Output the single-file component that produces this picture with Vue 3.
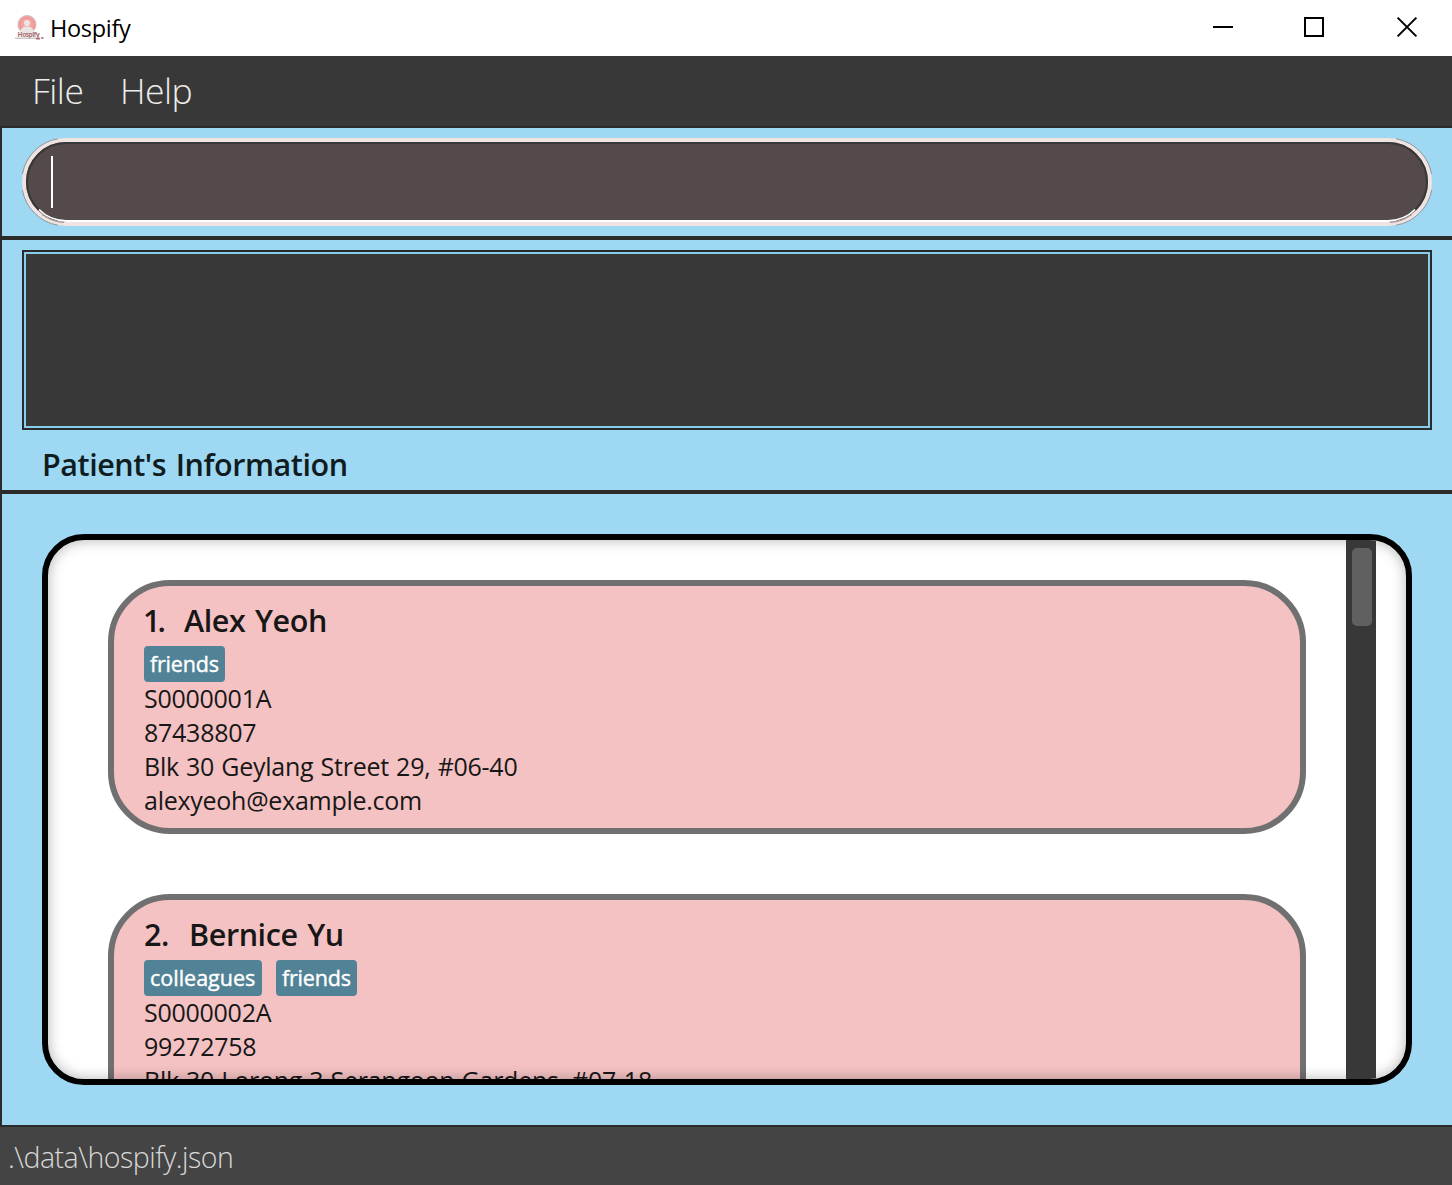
<script setup>
const menus = ['File', 'Help']
const patients = [
  {
    name: 'Alex Yeoh',
    tags: ['friends'],
    lines: ['S0000001A', '87438807', 'Blk 30 Geylang Street 29, #06-40', 'alexyeoh@example.com'],
  },
  {
    name: 'Bernice Yu',
    tags: ['colleagues', 'friends'],
    lines: ['S0000002A', '99272758', 'Blk 30 Lorong 3 Serangoon Gardens, #07-18'],
  },
]
</script>

<template>
  <div class="window">
    <header class="titlebar">
      <svg class="logo" width="30" height="28" viewBox="0 0 30 28">
        <circle cx="12" cy="10.5" r="9" fill="#f9a3a3" stroke="#c3b0b0" stroke-width="0.8" />
        <circle cx="12" cy="10.8" r="7" fill="none" stroke="#e08c8e" stroke-width="0.8" />
        <circle cx="12" cy="9" r="3.1" fill="#e9e6e6" />
        <path d="M4.5 19.5Q5.5 13.5 10.5 12.5H13.5Q18.5 13.5 19.5 19.5Z" fill="#e9e6e6" />
        <text class="logo-text" x="2.6" y="23" textLength="22">Hospify</text>
        <path d="M0 24.2H21" stroke="#b9aeb0" />
        <path d="M21 24.6H25M26 24H28.6" stroke="#a56d75" stroke-width="1.6" />
      </svg>
      <span class="app-name">Hospify</span>
      <div class="controls">
        <svg width="24" height="24" viewBox="0 0 24 24"><path d="M2 12H22" /></svg>
        <svg width="24" height="24" viewBox="0 0 24 24"><path d="M3 3H21V21H3Z" /></svg>
        <svg class="close" width="24" height="24" viewBox="0 0 24 24"><path d="M2.6 2.6L21.4 21.4M21.4 2.6L2.6 21.4" /></svg>
      </div>
    </header>

    <nav class="menubar">
      <span v-for="m in menus" :key="m" :class="['menu', m.toLowerCase()]">{{ m }}</span>
    </nav>

    <section class="command">
      <div class="field">
        <span class="caret"></span>
        <svg class="shine" width="1410" height="88" viewBox="0 0 1410 88" fill="none">
          <path d="M5 44A39 39 0 0 1 44 5H1366A39 39 0 0 1 1405 44A39 39 0 0 1 1393 72M5 44A39 39 0 0 0 17 72" stroke="#383838" stroke-width="2" />
          <path d="M44 83H1366" stroke="#fff" stroke-width="2" />
          <path d="M17 71.5Q27 82 44 83M1393 71.5Q1383 82 1366 83" stroke="#fff" stroke-width="1.8" />
          <path d="M20 76.5Q30 84 42 84.5M1390 76.5Q1380 84 1368 84.5" stroke="#8a8080" stroke-width="0.8" />
          <path d="M0.4 36A43.6 43.6 0 0 1 36 0.8M0.4 52A43.6 43.6 0 0 0 36 87.2M1409.6 36A43.6 43.6 0 0 0 1374 0.8M1409.6 52A43.6 43.6 0 0 1 1374 87.2" stroke="#8b8585" stroke-width="0.8" />
        </svg>
      </div>
    </section>

    <section class="result">
      <div class="display"></div>
      <h2 class="heading">Patient's Information</h2>
    </section>

    <section class="list-area">
      <div class="list">
        <div class="cards">
          <article v-for="(p, i) in patients" :key="p.name" class="card">
            <div class="name-row">
              <span :class="['num', 'num-' + (i + 1)]">{{ i + 1 }}.</span>
              <span class="name">{{ p.name }}</span>
            </div>
            <div class="tags">
              <span v-for="t in p.tags" :key="t" :class="['tag', t]">{{ t }}</span>
            </div>
            <div v-for="l in p.lines" :key="l" class="line">{{ l }}</div>
          </article>
        </div>
        <div class="scrollbar"><div class="thumb"></div></div>
      </div>
    </section>

    <footer class="status">.\data\hospify.json</footer>
  </div>
</template>

<style>
body {
  margin: 0;
  overflow: hidden;
}
</style>

<style scoped>
.window {
  width: 1452px;
  height: 1185px;
  display: flex;
  flex-direction: column;
  overflow: hidden;
  background: #9fd8f3;
  font-family: "Open Sans", "Noto Sans", sans-serif;
  color: #171717;
}
.window * {
  box-sizing: border-box;
  white-space: nowrap;
}
.titlebar {
  flex: none;
  height: 56px;
  display: flex;
  align-items: center;
  background: #fff;
  padding: 0 33px 0 15px;
}
.logo {
  flex: none;
}
.logo-text {
  font: 700 6.5px "Open Sans", sans-serif;
  fill: #a56d75;
}
.app-name {
  margin-left: 5px;
  font-size: 23.5px;
  line-height: 56px;
  color: #000;
  letter-spacing: -0.3px;
}
.controls {
  margin-left: auto;
  display: flex;
  gap: 68px;
  padding-bottom: 2px;
}
.controls svg {
  fill: none;
  stroke: #000;
  stroke-width: 2;
}
.controls svg:nth-child(2) {
  margin-left: -1px;
}
.controls .close {
  margin-left: 1px;
}
.menubar {
  flex: none;
  height: 72px;
  display: flex;
  background: #383838;
  border-bottom: 2px solid #2b2b2b;
  padding-left: 32px;
  color: #ececec;
  font-size: 35.5px;
  font-weight: 300;
  line-height: 69px;
  letter-spacing: -0.5px;
}
.menu.file {
  width: 88px;
}
.command {
  flex: none;
  height: 112px;
  border-left: 2px solid #2b2b2b;
  border-bottom: 4px solid #2b2b2b;
  padding: 10px 20px;
}
.field {
  position: relative;
  height: 88px;
  border: 4px solid #efe4e2;
  border-radius: 44px;
  background: #544a4a;
  padding: 14px 0 0 25px;
}
.caret {
  display: block;
  width: 2px;
  height: 52px;
  background: #fff;
}
.shine {
  position: absolute;
  left: -4px;
  top: -4px;
}
.result {
  flex: none;
  height: 254px;
  border-left: 2px solid #2b2b2b;
  border-bottom: 4px solid #2b2b2b;
  padding: 10px 20px 0;
}
.display {
  height: 180px;
  border: 2px solid #2b2b2b;
  background: #383838;
  box-shadow: inset 0 0 0 2px #87cdf0;
}
.heading {
  margin: 0;
  padding-left: 20px;
  font-size: 30.5px;
  font-weight: 600;
  line-height: 68px;
  letter-spacing: -0.45px;
  word-spacing: 2px;
  color: #101c20;
}
.list-area {
  flex: 1;
  min-height: 0;
  border-left: 2px solid #2b2b2b;
  padding: 40px;
}
.list {
  position: relative;
  height: 551px;
  display: flex;
  border: 6px solid #000;
  border-radius: 42px;
  background: #fff;
  overflow: hidden;
  padding-right: 30px;
}
.list::after {
  content: "";
  position: absolute;
  inset: 0;
  border-radius: 36px;
  box-shadow: inset 0 0 14px rgba(0, 0, 0, 0.3);
  pointer-events: none;
}
.cards {
  flex: 1;
  padding: 40px 40px 0 60px;
}
.card {
  height: 254px;
  margin-bottom: 60px;
  border: 6px solid #707070;
  border-radius: 62px;
  background: #f4c2c3;
  padding: 14px 30px 0;
}
.name-row {
  height: 46px;
  display: flex;
  font-size: 30.5px;
  font-weight: 600;
  line-height: 40px;
  letter-spacing: -0.4px;
  word-spacing: 2px;
}
.num-1 {
  width: 40px;
  letter-spacing: -3px;
  text-indent: -1px;
}
.num-2 {
  width: 45px;
}
.tags {
  height: 36px;
  display: flex;
  gap: 14px;
}
.tag {
  height: 36px;
  padding: 0 6px;
  border-radius: 4px;
  background: #528296;
  color: #fff;
  font-size: 21.5px;
  line-height: 35px;
  letter-spacing: -0.2px;
  -webkit-text-stroke: 0.4px #fff;
}
.tag.friends {
  width: 81px;
}
.tag.colleagues {
  width: 118px;
  letter-spacing: 0;
}
.line {
  height: 34px;
  font-size: 25px;
  line-height: 33px;
  letter-spacing: -0.26px;
  word-spacing: 1px;
}
.scrollbar {
  position: relative;
  z-index: 1;
  flex: none;
  width: 30px;
  background: #383838;
  padding: 8px 4px 0 6px;
}
.thumb {
  width: 20px;
  height: 78px;
  border-radius: 5px;
  background: #606060;
}
.status {
  flex: none;
  height: 60px;
  border-top: 2px solid #2b2b2b;
  background: #444;
  color: #d8d8d8;
  padding-left: 8px;
  font-size: 28.5px;
  font-weight: 300;
  line-height: 60px;
  letter-spacing: -0.5px;
}
</style>
